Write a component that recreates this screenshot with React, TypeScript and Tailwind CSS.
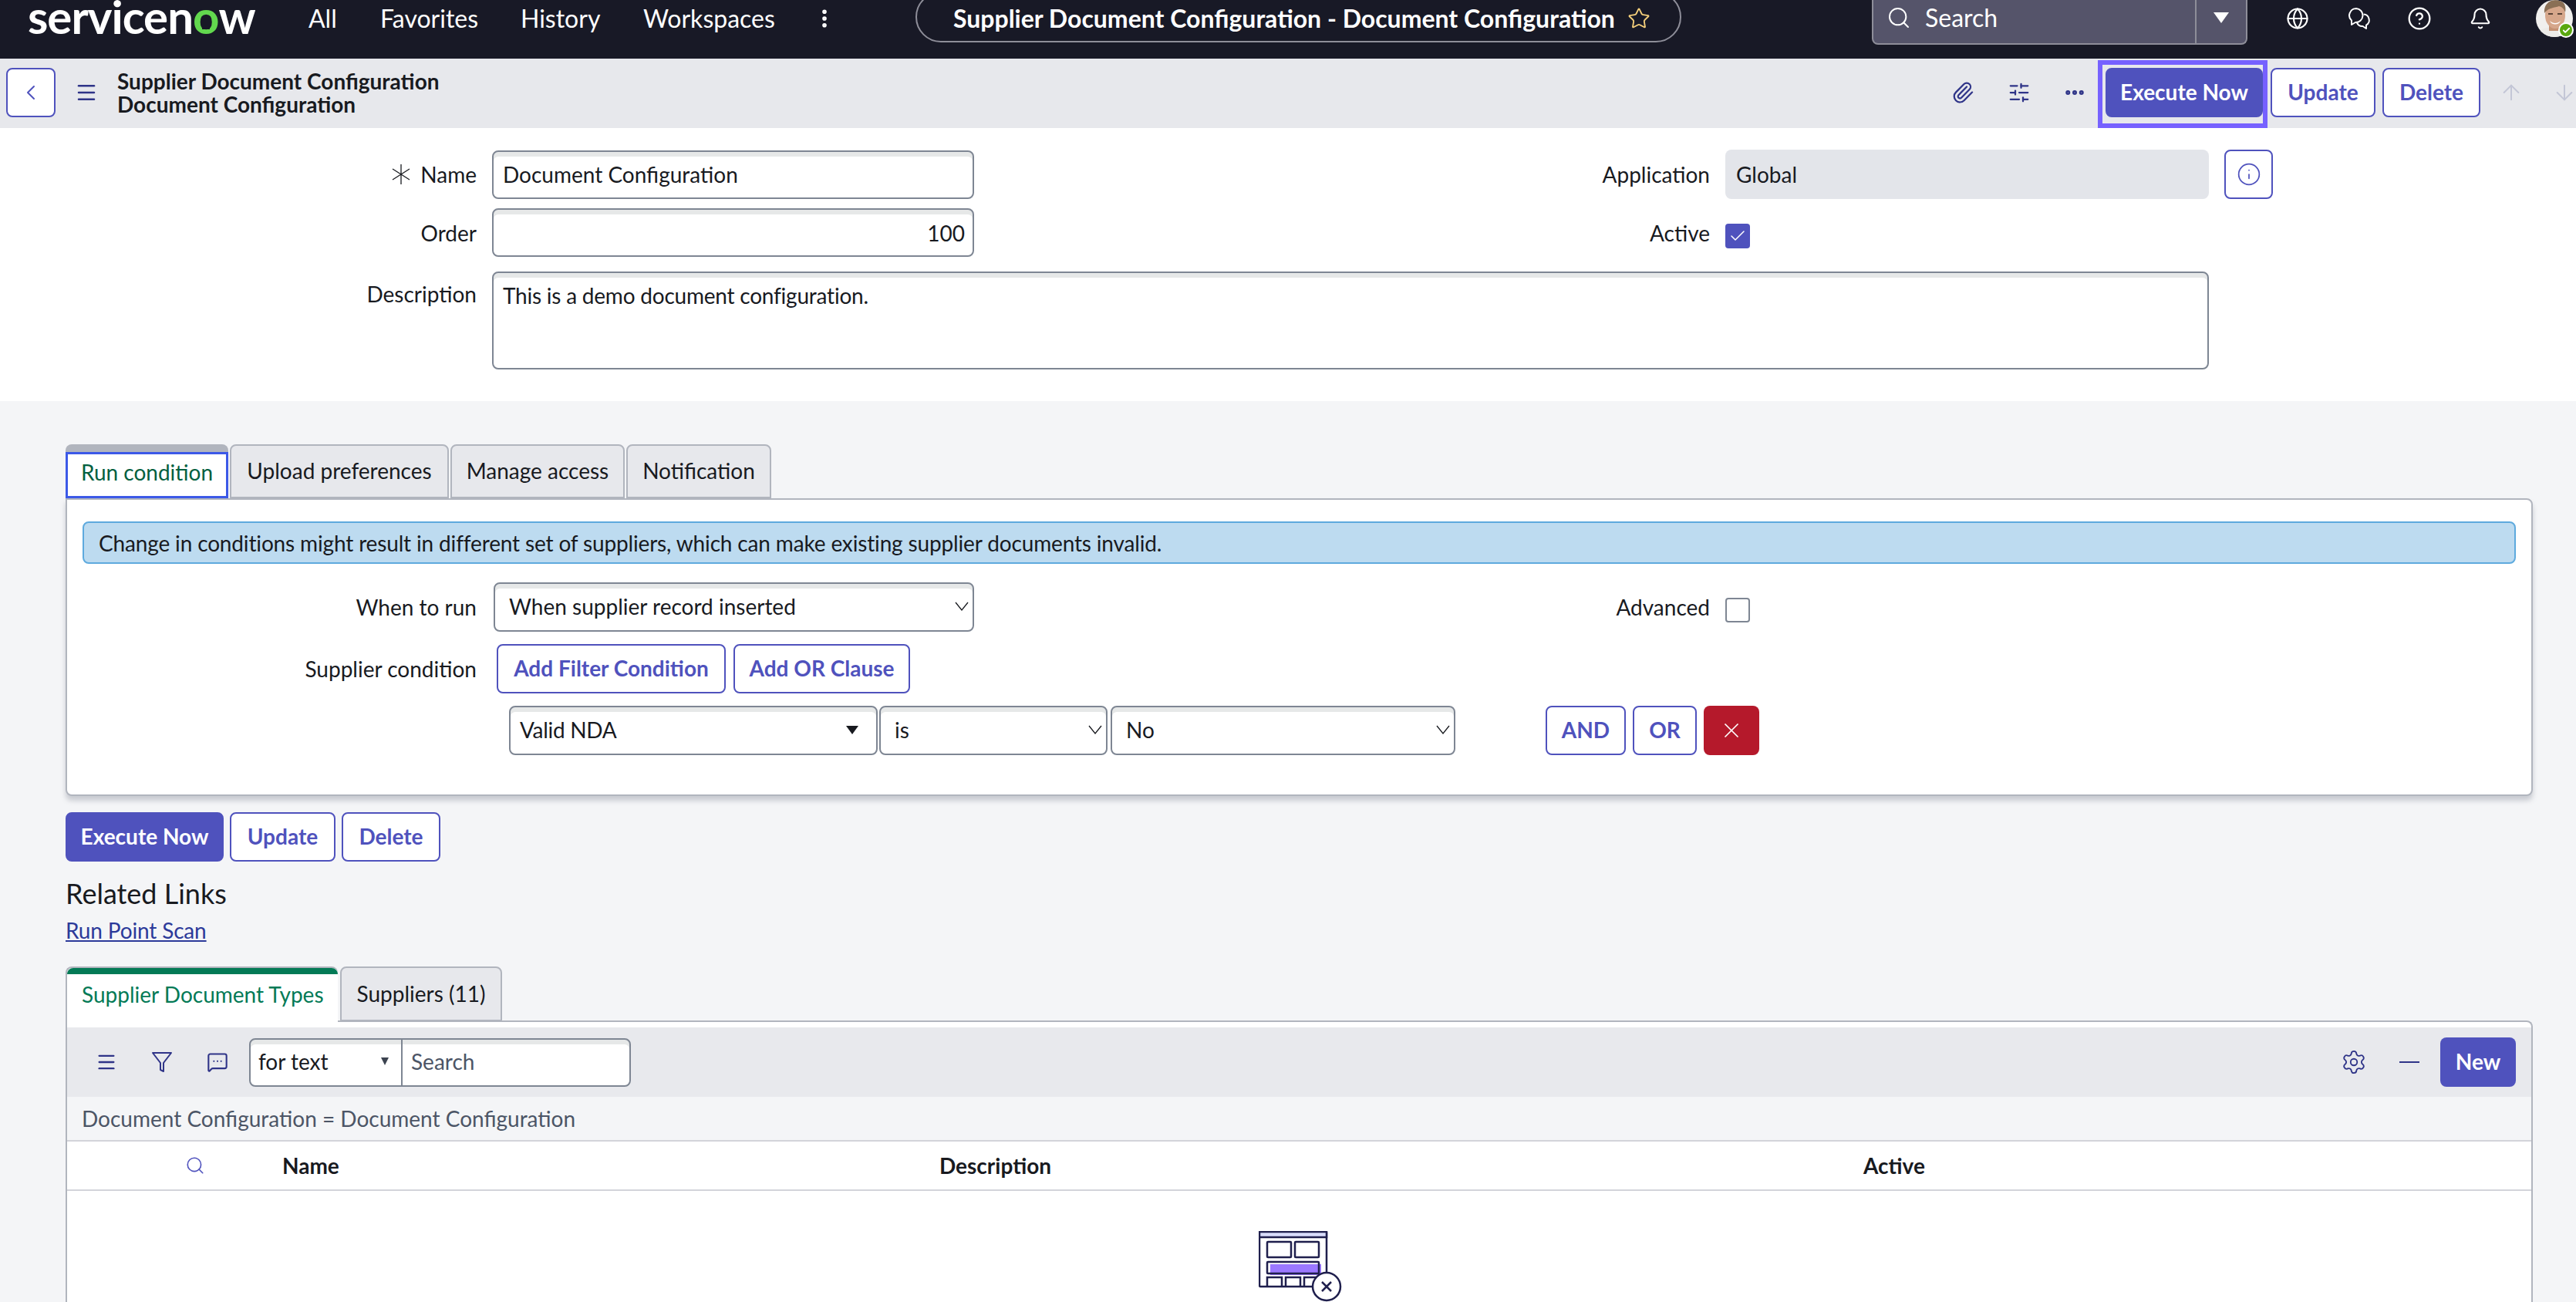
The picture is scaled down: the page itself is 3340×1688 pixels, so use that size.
import { ReactNode } from 'react';
import {
  ArrowDown,
  ArrowUp,
  Bell,
  Check,
  ChevronLeft,
  CircleHelp,
  Ellipsis,
  EllipsisVertical,
  Globe,
  Info,
  Menu,
  MessageSquareMore,
  Paperclip,
  Search,
  Settings,
  SlidersHorizontal,
  Star,
  X,
} from 'lucide-react';

const Button = ({ children, primary, className = '' }: { children: ReactNode; primary?: boolean; className?: string }) => (
  <div
    className={`h-16 shrink-0 pb-[2px] flex items-center justify-center rounded-lg border-2 border-[#4f52bd] text-[28px] font-bold ${
      primary ? 'bg-[#4f52bd] text-white' : 'bg-white text-[#4f52bd]'
    } ${className}`}
  >
    {children}
  </div>
);

const Field = ({ children, className = '' }: { children?: ReactNode; className?: string }) => (
  <div
    className={`shrink-0 flex items-center rounded-lg border-2 border-[#7e8693] bg-white shadow-[inset_0_6px_0_#e6e8e8] text-[28px] text-[#181a1f] ${className}`}
  >
    {children}
  </div>
);

const Label = ({ children, className = '' }: { children: ReactNode; className?: string }) => (
  <div className={`shrink-0 text-right text-[28px] text-[#181a1f] ${className}`}>{children}</div>
);

const SelectChevron = () => (
  <svg width="18" height="12" viewBox="0 0 18 12" fill="none" stroke="#181a1f" strokeWidth="1.300" className="shrink-0">
    <path d="M1 1l8 10 8-10" />
  </svg>
);

const Tab = ({ children, className = '' }: { children: ReactNode; className?: string }) => (
  <div
    className={`h-[70px] pb-[2px] flex items-center justify-center rounded-t-lg border-2 border-[#b1b5be] bg-[#e7e8ec] text-[28px] text-[#181a1f] ${className}`}
  >
    {children}
  </div>
);

const ChatBubbles = () => (
  <svg width="32" height="32" viewBox="0 0 32 32" fill="none" stroke="white" strokeWidth="2" strokeLinejoin="round">
    <path d="M12 3a9 9 0 0 0-6 15.600V24l5-3a9 9 0 1 0 1-18Z" />
    <path d="M21.500 10.500A7.500 7.500 0 0 1 25 24.500V29l-4.500-3a7.500 7.500 0 0 1-7.500-4.500" />
  </svg>
);

const Funnel = () => (
  <svg width="28" height="28" viewBox="0 0 28 28" fill="none" stroke="#2f3488" strokeWidth="2" strokeLinejoin="round">
    <path d="M2 2h24L16 15v11l-4-2v-9Z" />
  </svg>
);

const RequiredMark = () => (
  <svg width="26" height="26" viewBox="0 0 26 26" fill="none" stroke="#181a1f" strokeWidth="1.300">
    <path d="M13 0v26M2 6l22 14M24 6L2 20" />
  </svg>
);

const Avatar = () => (
  <div className="relative w-12 h-12 shrink-0">
    <div className="w-12 h-12 rounded-full overflow-hidden bg-[#f1f0ee]">
      <svg width="48" height="48" viewBox="0 0 48 48" className="blur-[0.6px]">
        <path d="M0 48c3-9 9-11 14-12h20c5 1 11 3 14 12Z" fill="#ecebe8" />
        <rect x="17" y="30" width="16" height="10" fill="#c59274" />
        <ellipse cx="25" cy="20" rx="13" ry="17" fill="#d6a78b" />
        <path d="M11 17C10 6 17 0 26 0c9 0 14 6 12 16-2-5-4-7-8-8-6 2-14 2-19 9Z" fill="#8a6f55" />
        <path d="M16 18h6M28 18h6" stroke="#5b4436" strokeWidth="2" />
        <path d="M18 27c4 4 10 4 14 0-2 6-12 6-14 0Z" fill="#fff" />
      </svg>
    </div>
    <div className="absolute left-[29px] top-[29px] w-[20px] h-[20px] rounded-full bg-[#5aa80f] border-2 border-white flex items-center justify-center">
      <Check size={11} strokeWidth={4} className="text-white" />
    </div>
  </div>
);

const TopBar = () => (
  <header className="h-[76px] shrink-0 bg-[#181926] text-white flex items-start overflow-hidden">
    <div className="w-[400px] shrink-0 pl-9 -mt-[4px] text-[60px] leading-[50px] font-bold tracking-[-1px]">
      servicen
      <span className="relative inline-block text-[#62d84e]">
        o
        <span className="absolute left-1/2 bottom-[8px] -ml-[5px] w-[10px] h-[8px] bg-[#181926]" />
      </span>
      w
    </div>
    <nav className="flex items-center h-[48px] text-[32px]">
      <span className="w-[93px]">All</span>
      <span className="w-[182px]">Favorites</span>
      <span className="w-[159px]">History</span>
      <span className="w-[222px]">Workspaces</span>
      <EllipsisVertical size={30} strokeWidth={2.500} className="-ml-[2px]" />
    </nav>
    <div className="ml-[103px] w-[993px] h-[66px] -mt-[11px] shrink-0 rounded-full border-2 border-[#8e8e99] flex items-center pl-[47px] pt-[4px] gap-[16px] text-[32px] font-bold">
      Supplier Document Configuration - Document Configuration
      <Star size={30} strokeWidth={1.500} className="text-[#f5cf7b]" />
    </div>
    <div className="ml-[247px] w-[487px] h-[58px] shrink-0 rounded-b-lg border-2 border-t-0 border-[#8e8e99] bg-[#55546a] flex items-center">
      <div className="flex-1 h-full pb-[10px] flex items-center pl-[17px] gap-[18px] text-[32px]">
        <Search size={32} strokeWidth={1.500} />
        Search
      </div>
      <div className="w-[66px] h-full pb-[10px] border-l-2 border-[#8e8e99] flex items-center justify-center">
        <div className="w-0 h-0 border-x-[10px] border-x-transparent border-t-[14px] border-t-white" />
      </div>
    </div>
    <div className="flex items-center h-[48px] ml-[50px]">
      <Globe size={30} strokeWidth={1.700} />
      <div className="ml-[49px]">
        <ChatBubbles />
      </div>
      <CircleHelp size={32} strokeWidth={1.700} className="ml-[46px]" />
      <Bell size={30} strokeWidth={1.700} className="ml-[48px]" />
    </div>
    <div className="ml-[57px]">
      <Avatar />
    </div>
  </header>
);

const SubHeader = () => (
  <div className="h-[90px] shrink-0 bg-[#e7e8ec] flex items-center pl-2 pb-[2px] text-[#181a1f]">
    <div className="w-16 h-16 rounded-lg border-2 border-[#4f52bd] bg-white flex items-center justify-center">
      <ChevronLeft size={32} strokeWidth={1.500} className="text-[#4f52bd]" />
    </div>
    <Menu size={30} strokeWidth={2} className="ml-[25px] text-[#2f3488]" />
    <div className="ml-[25px] text-[28px] leading-[30px] font-bold">
      <div>Supplier Document Configuration</div>
      <div>Document Configuration</div>
    </div>
    <div className="ml-auto flex items-center text-[#2f3488]">
      <Paperclip size={30} strokeWidth={1.800} />
      <SlidersHorizontal size={30} strokeWidth={1.800} className="ml-[43px]" />
      <Ellipsis size={30} strokeWidth={2.800} className="ml-[42px]" />
      <div className="ml-[15px] h-[88px] w-[220px] mt-[4px] pb-[4px] border-[6px] border-[#7661ff] flex items-center pl-[4px]">
        <Button primary className="w-[204px]">
          Execute Now
        </Button>
      </div>
      <Button className="ml-[4px] w-[136px]">Update</Button>
      <Button className="ml-[9px] w-[127px]">Delete</Button>
      <ArrowUp size={32} strokeWidth={1.500} className="ml-[24px] text-[#c3c6d6]" />
      <ArrowDown size={32} strokeWidth={1.500} className="ml-[37px] mr-[-1px] text-[#c3c6d6]" />
    </div>
  </div>
);

const RecordForm = () => (
  <section className="shrink-0 bg-white pt-[28px] pb-[41px]">
    <div className="flex items-center">
      <Label className="w-[618px] flex items-center justify-end gap-[12px]">
        <RequiredMark />
        Name
      </Label>
      <Field className="ml-5 w-[625px] h-[63px] px-3">Document Configuration</Field>
      <Label className="w-[954px]">Application</Label>
      <div className="ml-5 w-[627px] h-16 rounded-lg bg-[#e3e5ea] flex items-center px-[14px] text-[28px] text-[#181a1f]">
        Global
      </div>
      <div className="ml-5 w-[63px] h-16 rounded-lg border-2 border-[#4f52bd] flex items-center justify-center">
        <Info size={32} strokeWidth={1.300} className="text-[#4f52bd]" />
      </div>
    </div>
    <div className="flex items-center mt-[12px]">
      <Label className="w-[618px]">Order</Label>
      <Field className="ml-5 w-[625px] h-[63px] px-[10px] justify-end">100</Field>
      <Label className="w-[954px]">Active</Label>
      <div className="ml-5 mt-[8px] w-8 h-8 rounded bg-[#4f52bd] flex items-center justify-center">
        <Check size={24} strokeWidth={1.500} className="text-white" />
      </div>
    </div>
    <div className="flex items-start mt-[19px]">
      <Label className="w-[618px] pt-[8px]">Description</Label>
      <Field className="ml-5 w-[2226px] h-[127px] px-3 pt-[8px] items-start! tracking-[-0.22px]">
        This is a demo document configuration.
      </Field>
    </div>
  </section>
);

const RunConditionPanel = () => (
  <>
    <div className="flex gap-[2px] relative z-10">
      <div className="w-[211px] h-[70px] rounded-t-lg bg-[#b1b5be] pt-[10px]">
        <div className="h-[60px] pb-[8px] border-[3px] border-[#3c59e7] bg-white flex items-center justify-center text-[28px] text-[#04603f]">
          Run condition
        </div>
      </div>
      <Tab className="w-[284px]">Upload preferences</Tab>
      <Tab className="w-[226px]">Manage access</Tab>
      <Tab className="w-[188px]">Notification</Tab>
    </div>
    <div className="h-[386px] bg-white border-2 border-[#b1b5be] rounded-b-lg rounded-tr-lg shadow-[0_6px_6px_rgba(120,125,140,0.35)] px-5 pt-[28px]">
      <div className="h-[55px] rounded-lg bg-[#bddbf0] border-2 border-[#5eaade] flex items-center pl-[19px] text-[28px] tracking-[-0.15px] text-[#181a1f]">
        Change in conditions might result in different set of suppliers, which can make existing supplier documents invalid.
      </div>
      <div className="flex items-center mt-[24px]">
        <Label className="w-[511px]">When to run</Label>
        <Field className="ml-[22px] w-[623px] h-16 pl-[18px] pr-[5px] pb-[2px] justify-between">
          When supplier record inserted
          <SelectChevron />
        </Field>
        <Label className="w-[954px]">Advanced</Label>
        <div className="ml-5 mt-[8px] w-8 h-8 rounded border-2 border-[#7e8693] bg-white" />
      </div>
      <div className="flex items-center mt-[16px]">
        <Label className="w-[511px]">Supplier condition</Label>
        <Button className="ml-[26px] w-[297px]">Add Filter Condition</Button>
        <Button className="ml-[10px] w-[229px]">Add OR Clause</Button>
      </div>
      <div className="flex items-center mt-[16px] ml-[553px]">
        <Field className="w-[478px] h-16 pl-[12px] pr-[23px] pb-[2px] justify-between tracking-[-0.3px]">
          Valid NDA
          <div className="w-0 h-0 border-x-[8px] border-x-transparent border-t-[11px] border-t-[#181a1f]" />
        </Field>
        <Field className="ml-[2px] w-[296px] h-16 pl-[18px] pr-[5px] pb-[2px] justify-between">
          is
          <SelectChevron />
        </Field>
        <Field className="ml-[4px] w-[447px] h-16 pl-[18px] pr-[5px] pb-[2px] justify-between">
          No
          <SelectChevron />
        </Field>
        <Button className="ml-[117px] w-[104px]">AND</Button>
        <Button className="ml-[9px] w-[83px]">OR</Button>
        <div className="ml-[9px] w-[72px] h-16 rounded-lg bg-[#b5192b] flex items-center justify-center">
          <X size={32} strokeWidth={1.300} className="text-white" />
        </div>
      </div>
    </div>
  </>
);

const RelatedList = () => (
  <>
    <div className="flex gap-[3px] relative z-10 -mb-[2px]">
      <div className="w-[353px] h-[72px] rounded-t-lg border-t-2 border-l-2 border-t-[#b1b5be] border-l-[#b1b5be] bg-white">
        <div className="h-2 bg-[#037a56] rounded-t-lg" />
        <div className="h-[62px] pb-[11px] flex items-center pl-[19px] text-[28px] text-[#037a56]">
          Supplier Document Types
        </div>
      </div>
      <Tab className="w-[210px] h-[71px]">Suppliers (11)</Tab>
    </div>
    <div className="flex-1 bg-white border-2 border-b-0 border-[#b1b5be] rounded-tr-lg pt-[7px] text-[28px]">
      <div className="h-[90px] bg-[#e8e9ed] flex items-center text-[#2f3488]">
        <Menu size={28} strokeWidth={2} className="ml-[37px]" />
        <div className="ml-[44px]">
          <Funnel />
        </div>
        <MessageSquareMore size={28} strokeWidth={1.800} className="ml-[44px]" />
        <Field className="ml-[27px] w-[199px] h-[63px] rounded-r-none pl-[10px] pr-[16px] pb-[3px] justify-between">
          for text
          <div className="w-0 h-0 border-x-[5px] border-x-transparent border-t-[10px] border-t-[#3c4350]" />
        </Field>
        <Field className="-ml-[2px] w-[298px] h-[63px] rounded-l-none px-[11px] pb-[3px] text-[#4c5566]!">Search</Field>
        <Settings size={34} strokeWidth={1.300} className="ml-auto" />
        <div className="ml-[42px] w-[26px] h-[2px] bg-[#2f3488]" />
        <div className="ml-[27px] mr-5 w-[98px] h-16 pb-[2px] rounded-lg bg-[#4f52bd] text-white font-bold flex items-center justify-center">
          New
        </div>
      </div>
      <div className="h-[58px] bg-[#f4f5f7] border-b-2 border-[#d3d4da] flex items-center pl-[19px] text-[#4c5566]">
        Document Configuration = Document Configuration
      </div>
      <div className="h-[64px] border-b-2 border-[#d3d4da] flex items-center font-bold text-[#181a1f]">
        <div className="w-[279px] pl-[153px]">
          <Search size={26} strokeWidth={1.500} className="text-[#4f52bd]" />
        </div>
        <div className="w-[852px]">Name</div>
        <div className="w-[1198px]">Description</div>
        <div>Active</div>
      </div>
      <div className="flex justify-center pt-[52px] pl-[2px]">
        <svg width="108" height="92" viewBox="0 0 108 92" fill="none" stroke="#1f1f4d" strokeWidth="2.500">
          <rect x="15" y="43" width="66" height="14" fill="#9b78ff" stroke="none" />
          <rect x="1" y="1" width="87" height="71" rx="1" />
          <rect x="1" y="1" width="87" height="7" fill="#d9dcfa" />
          <rect x="11" y="14" width="31" height="20" rx="1" />
          <rect x="47" y="14" width="31" height="20" rx="1" />
          <rect x="11" y="40" width="67" height="15" rx="1" />
          <path d="M11 72V60h19v12M35 72V60h19v12M59 72V60h19v12" />
          <circle cx="88" cy="72" r="18" fill="white" />
          <path d="M82 66l12 12M94 66L82 78" />
        </svg>
      </div>
    </div>
  </>
);

export default function App() {
  return (
    <div className="w-[3340px] h-[1688px] overflow-hidden flex flex-col bg-[#f4f5f7] [font-family:Lato,sans-serif]">
      <TopBar />
      <SubHeader />
      <RecordForm />
      <main className="flex-1 min-h-0 flex flex-col pl-[85px] pr-[56px] pt-[56px]">
        <RunConditionPanel />
        <div className="flex gap-2 mt-[21px]">
          <Button primary className="w-[205px]">
            Execute Now
          </Button>
          <Button className="w-[137px]">Update</Button>
          <Button className="w-[128px]">Delete</Button>
        </div>
        <h2 className="mt-[19px] text-[36px] leading-[44px] text-[#181a1f]">Related Links</h2>
        <a className="mt-[8px] w-fit text-[28px] tracking-[-0.15px] leading-[36px] text-[#2c3a9a] underline">
          Run Point Scan
        </a>
        <div className="mt-[29px] flex-1 min-h-0 flex flex-col">
          <RelatedList />
        </div>
      </main>
    </div>
  );
}
